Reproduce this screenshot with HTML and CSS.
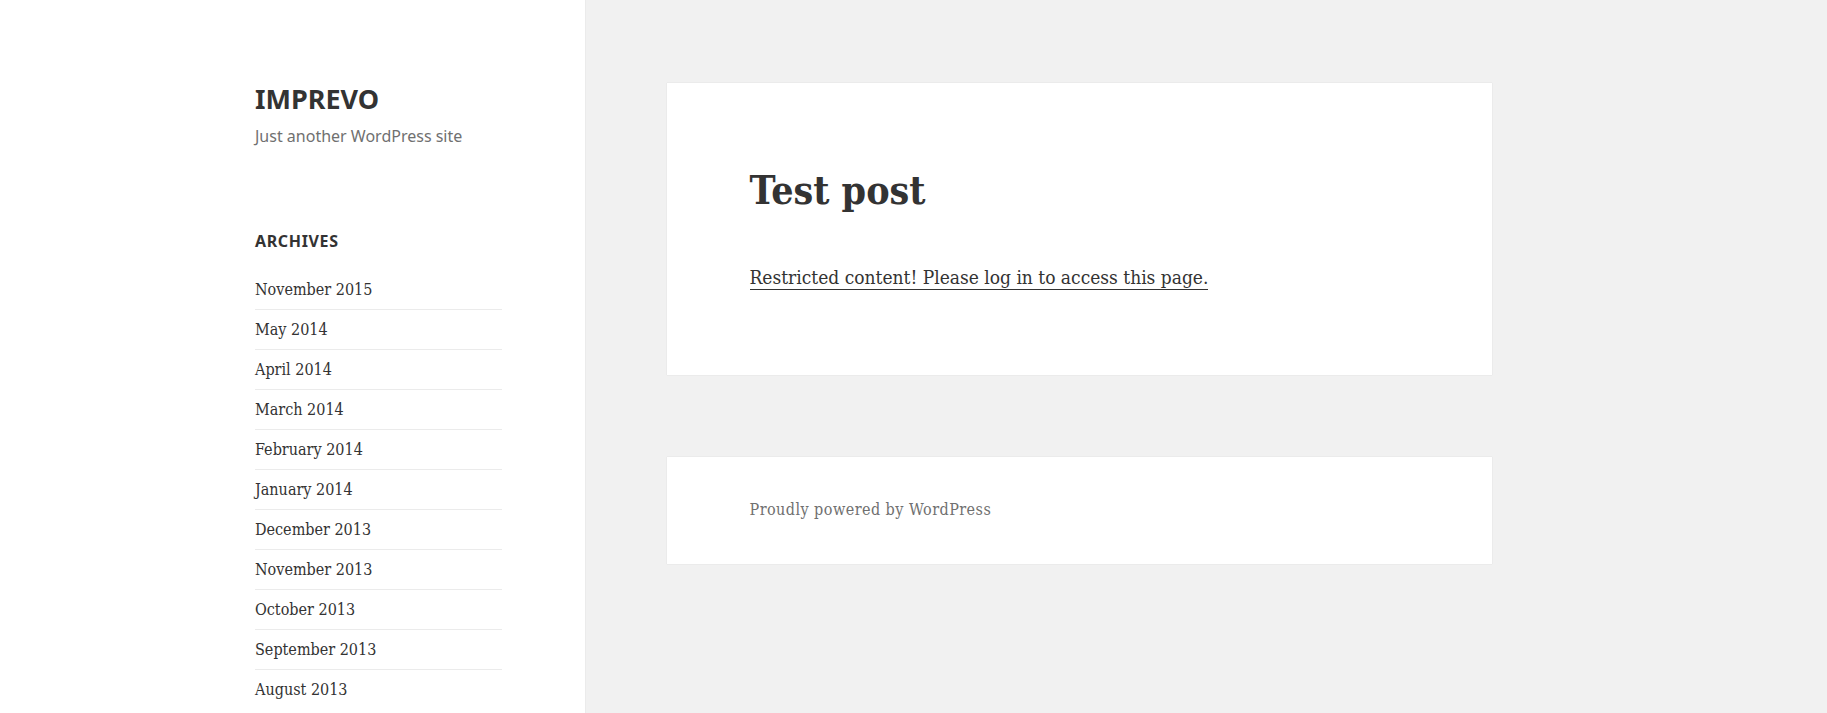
FILE: index.html
```html
<!DOCTYPE html>
<html lang="en">
<head>
<meta charset="utf-8">
<title>IMPREVO – Just another WordPress site</title>
<link rel="stylesheet" href="styles.css">
</head>
<body>
<div class="page">
  <aside class="sidebar">
    <header class="site-header">
      <p class="site-title"><a href="#">IMPREVO</a></p>
      <p class="site-description">Just another WordPress site</p>
    </header>
    <section class="widget">
      <h2 class="widget-title">Archives</h2>
      <ul class="archive-list">
        <li><a href="#">November 2015</a></li>
        <li><a href="#">May 2014</a></li>
        <li><a href="#">April 2014</a></li>
        <li><a href="#">March 2014</a></li>
        <li><a href="#">February 2014</a></li>
        <li><a href="#">January 2014</a></li>
        <li><a href="#">December 2013</a></li>
        <li><a href="#">November 2013</a></li>
        <li><a href="#">October 2013</a></li>
        <li><a href="#">September 2013</a></li>
        <li><a href="#">August 2013</a></li>
      </ul>
    </section>
  </aside>
  <main class="main">
    <article class="card post">
      <h1 class="entry-title">Test post</h1>
      <p class="entry-content"><a href="#">Restricted content! Please log in to access this page.</a></p>
    </article>
    <footer class="card site-footer">
      <a href="#">Proudly powered by WordPress</a>
    </footer>
  </main>
</div>
</body>
</html>
```
FILE: styles.css
```css
html, body {
  margin: 0;
  padding: 0;
}
body {
  background: #f1f1f1;
  color: #333333;
  font-family: "DejaVu Serif Condensed", "DejaVu Serif", serif;
  font-stretch: condensed;
}
a {
  color: inherit;
  text-decoration: none;
}
.page {
  display: flex;
  align-items: stretch;
  min-height: 100vh;
}
.sidebar {
  flex: 0 0 585px;
  box-sizing: border-box;
  background: #ffffff;
  box-shadow: 0 0 1px rgba(0, 0, 0, 0.15);
  padding: 81px 83px 0 255px;
}
.site-title {
  margin: 0;
  font-family: "Noto Sans", "Open Sans", sans-serif;
  font-stretch: normal;
  font-weight: 700;
  font-size: 27px;
  line-height: 35px;
  color: #333333;
}
.site-description {
  margin: 8px 0 0;
  font-family: "Noto Sans", "Open Sans", sans-serif;
  font-stretch: normal;
  font-size: 16px;
  line-height: 24px;
  color: #707070;
}
.widget {
  margin-top: 81px;
}
.widget-title {
  margin: 0 0 17px;
  font-family: "Noto Sans", "Open Sans", sans-serif;
  font-stretch: normal;
  font-weight: 700;
  font-size: 16px;
  line-height: 24px;
  letter-spacing: 0.04em;
  text-transform: uppercase;
  color: #333333;
}
.archive-list {
  list-style: none;
  margin: 0;
  padding: 0;
  font-size: 16px;
  line-height: 24px;
}
.archive-list li {
  padding: 8px 0 7px;
  border-top: 1px solid #ebebeb;
}
.archive-list li:first-child {
  border-top: 0;
}
.main {
  flex: 1 1 auto;
  padding: 83px 0 0 82px;
}
.card {
  width: 825px;
  box-sizing: border-box;
  background: #ffffff;
  box-shadow: 0 0 1px rgba(0, 0, 0, 0.15);
}
.post {
  padding: 83px 82.5px 82px;
}
.entry-title {
  margin: 0 0 46.5px;
  font-size: 39px;
  line-height: 48px;
  font-weight: 700;
  color: #333333;
}
.entry-content {
  margin: 0;
  font-size: 19px;
  line-height: 32px;
}
.entry-content a {
  border-bottom: 1px solid #333333;
  padding-bottom: 1px;
}
.site-footer {
  margin-top: 82px;
  padding: 41.5px 82.5px;
  font-size: 16px;
  line-height: 24px;
  letter-spacing: 0.45px;
  color: #707070;
}
```
